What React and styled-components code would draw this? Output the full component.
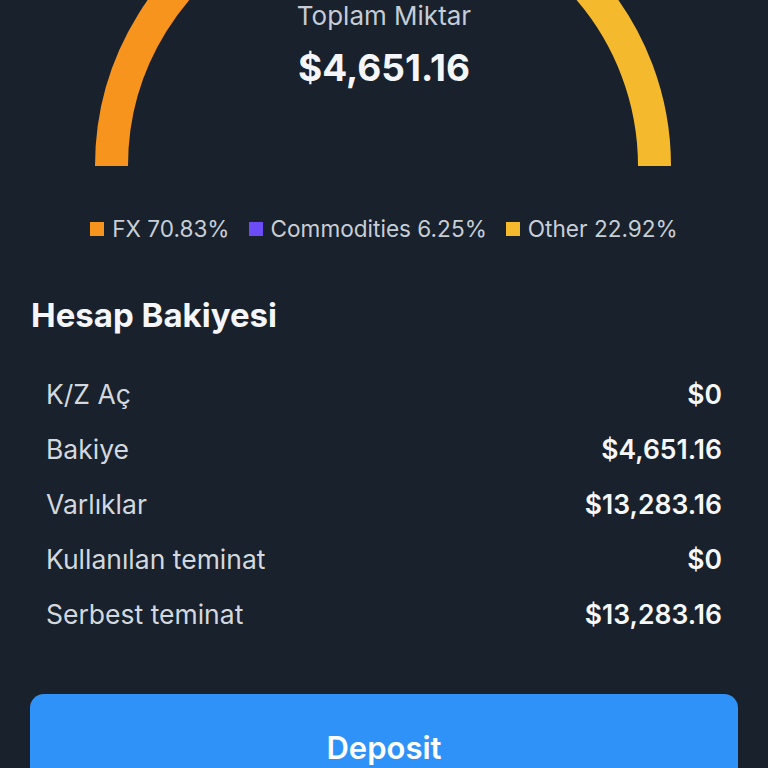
import React from 'react';
import styled, { createGlobalStyle } from 'styled-components';

const GlobalStyle = createGlobalStyle`
  body {
    margin: 0;
    background: #18212c;
    font-family: 'Inter', 'Noto Sans', sans-serif;
  }
`;

const segments = [
  { label: 'FX', value: 70.83, color: '#f7941d' },
  { label: 'Commodities', value: 6.25, color: '#6b4cf6' },
  { label: 'Other', value: 22.92, color: '#f5b92e' },
];

const rows = [
  { label: 'K/Z Aç', value: '$0' },
  { label: 'Bakiye', value: '$4,651.16' },
  { label: 'Varlıklar', value: '$13,283.16' },
  { label: 'Kullanılan teminat', value: '$0' },
  { label: 'Serbest teminat', value: '$13,283.16' },
];

// yarım daire üzerindeki nokta
const point = (f) => {
  const cx = 383;
  const cy = 166;
  const r = 271.5;
  const t = Math.PI * (1 - f);
  return [cx + r * Math.cos(t), cy - r * Math.sin(t)];
};

const arcPath = (from, to) => {
  const [x1, y1] = point(from);
  const [x2, y2] = point(to);
  return `M ${x1} ${y1} A 271.5 271.5 0 0 1 ${x2} ${y2}`;
};

const GaugeChart = () => {
  let acc = 0;
  return (
    <Svg viewBox='0 0 768 175' width='768' height='175'>
      {segments.map((s) => {
        const from = acc / 100;
        acc += s.value;
        return (
          <path
            key={s.label}
            d={arcPath(from, acc / 100)}
            fill='none'
            stroke={s.color}
            strokeWidth='33'
          />
        );
      })}
    </Svg>
  );
};

const App = () => {
  return (
    <Page>
      <GlobalStyle />
      <Gauge>
        <GaugeChart />
        <Total>
          <TotalLabel>Toplam Miktar</TotalLabel>
          <TotalValue>$4,651.16</TotalValue>
        </Total>
      </Gauge>
      <Legend>
        {segments.map((s) => (
          <LegendItem key={s.label}>
            <Swatch color={s.color} />
            {s.label} {s.value.toFixed(2)}%
          </LegendItem>
        ))}
      </Legend>
      <Title>Hesap Bakiyesi</Title>
      <List>
        {rows.map((r) => (
          <Row key={r.label}>
            <RowLabel>{r.label}</RowLabel>
            <RowValue>{r.value}</RowValue>
          </Row>
        ))}
      </List>
      <DepositButton>Deposit</DepositButton>
    </Page>
  );
};

const Page = styled.div`
  width: 768px;
  height: 768px;
  overflow: hidden;
  display: flex;
  flex-direction: column;
`;
const Gauge = styled.div`
  display: grid;
  height: 175px;
`;
const Svg = styled.svg`
  grid-area: 1 / 1;
  display: block;
`;
const Total = styled.div`
  grid-area: 1 / 1;
  display: flex;
  flex-direction: column;
  align-items: center;
`;
const TotalLabel = styled.div`
  margin-top: 0px;
  font-size: 26px;
  line-height: 32px;
  color: #c5ccd6;
`;
const TotalValue = styled.div`
  margin-top: 14px;
  font-size: 37px;
  line-height: 44px;
  font-weight: 700;
  color: #f4f6f9;
`;
const Legend = styled.div`
  margin-top: 43px;
  display: flex;
  justify-content: center;
  gap: 19px;
  font-size: 22.6px;
  line-height: 22px;
  color: #c8ced6;
`;
const LegendItem = styled.div`
  display: flex;
  align-items: center;
  gap: 8px;
`;
const Swatch = styled.span`
  width: 14px;
  height: 14px;
  background: ${(p) => p.color};
`;
const Title = styled.h2`
  margin: 55px 0 0 31px;
  font-size: 33px;
  line-height: 40px;
  font-weight: 700;
  color: #f4f6f9;
`;
const List = styled.div`
  margin: 31px 46px 0 46px;
  display: flex;
  flex-direction: column;
`;
const Row = styled.div`
  height: 55px;
  display: flex;
  align-items: center;
  justify-content: space-between;
  font-size: 26.5px;
`;
const RowLabel = styled.span`
  color: #d3d8df;
`;
const RowValue = styled.span`
  color: #f6f7f9;
  font-weight: 600;
`;
const DepositButton = styled.button`
  margin: 53px 30px 0 30px;
  flex-shrink: 0;
  height: 106px;
  border: none;
  border-radius: 14px;
  background: #2f92f8;
  color: #ffffff;
  font-family: inherit;
  font-size: 31px;
  font-weight: 600;
`;

export default App;
